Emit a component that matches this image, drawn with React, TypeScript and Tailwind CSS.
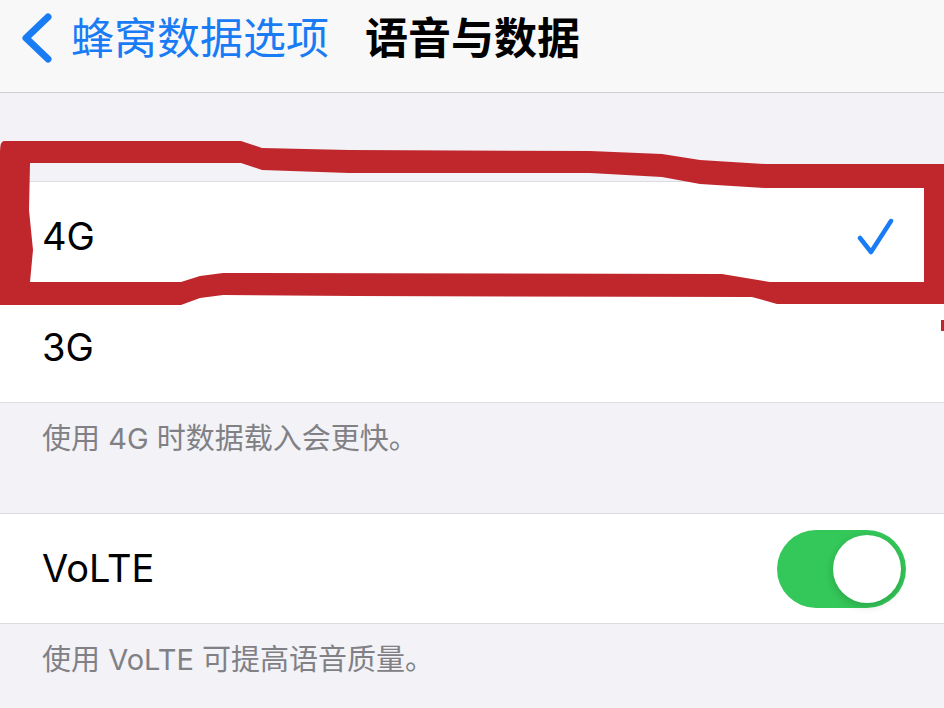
import { useState } from "react";

const latin = "font-['Inter','Noto_Sans_CJK_SC',sans-serif]";

function Marker() {
  // hand-drawn red highlight around the 4G row
  const outer =
    "M4 141 L241 141 L262 148 L349 150 L590 151 L662 154 L700 160 L765 164 L944 164 L944 304 L777 304 L752 297 L355 296 L223 295 L200 298 L181 305 L0 305 L0 152 Q0 141 4 141 Z";
  const inner =
    "M30 163 L241 163 L262 170 L349 173 L590 173 L662 177 L700 184 L765 188 L924 188 L924 282 L770 282 L722 274 L223 273 L200 276 L181 282 L30 282 L33 250 L29 210 Z";
  return (
    <svg className="absolute left-0 top-0 pointer-events-none" width="944" height="708" viewBox="0 0 944 708">
      <path d={outer + " " + inner} fill="#c0272d" fillRule="evenodd" />
      <path d="M941 320 L944 320 L944 331 L941 331 Z" fill="#c0272d" />
    </svg>
  );
}

function Toggle({ on, onChange }: { on: boolean; onChange: () => void }) {
  return (
    <button
      onClick={onChange}
      className={`w-[129px] h-[78px] rounded-full p-[5px] flex items-center ${on ? "bg-[#34c759] justify-end" : "bg-[#e5e5ea] justify-start"}`}
    >
      <span className="w-[68px] h-[68px] rounded-full bg-white shadow-[0_3px_8px_rgba(0,0,0,0.18)]" />
    </button>
  );
}

export default function App() {
  const [network, setNetwork] = useState("4G");
  const [volte, setVolte] = useState(true);

  return (
    <div className={`relative w-[944px] h-[708px] overflow-hidden bg-[#f2f2f7] ${latin}`}>
      {/* Nav bar */}
      <div className="h-[93px] bg-[#f8f8f8] border-b border-[#cfcfd3] flex items-center">
        <div className="flex items-center pl-[20px] pb-[16px]">
          <svg width="34" height="50" viewBox="0 0 34 50" className="mr-[17px]">
            <path d="M28 4 L6 25 L28 46" fill="none" stroke="#1a7cf5" strokeWidth="7" strokeLinecap="round" strokeLinejoin="round" />
          </svg>
          <span className="text-[43px] leading-[50px] text-[#1a7cf5]">蜂窝数据选项</span>
          <span className="ml-[36px] text-[43px] leading-[50px] font-semibold text-black">语音与数据</span>
        </div>
      </div>

      <div className="h-[88px]" />

      {/* Network group */}
      <div className="bg-white border-y border-[#dcdce0]">
        {["4G", "3G"].map((n, i) => (
          <div key={n} onClick={() => setNetwork(n)} className="pl-[42px] cursor-pointer">
            <div className={`h-[110px] flex items-center justify-between pr-[50px] ${i === 0 ? "border-b border-[#dcdce0]" : ""}`}>
              <span className="text-[38px] text-black">{n}</span>
              {network === n && (
                <svg width="38" height="38" viewBox="0 0 38 38">
                  <path d="M4 20 L15 34 L35 3" fill="none" stroke="#1a7cf5" strokeWidth="4.5" strokeLinecap="round" strokeLinejoin="round" />
                </svg>
              )}
            </div>
          </div>
        ))}
      </div>
      <p className="px-[42px] pt-[16px] text-[29px] leading-[40px] text-[#808085]">使用 4G 时数据载入会更快。</p>

      <div className="h-[54px]" />

      {/* VoLTE group */}
      <div className="bg-white border-y border-[#dcdce0]">
        <div className="h-[109px] pl-[42px] pr-[38px] flex items-center justify-between">
          <span className="text-[38px] text-black">VoLTE</span>
          <Toggle on={volte} onChange={() => setVolte(!volte)} />
        </div>
      </div>
      <p className="px-[42px] pt-[16px] text-[29px] leading-[40px] text-[#808085]">使用 VoLTE 可提高语音质量。</p>

      <Marker />
    </div>
  );
}
